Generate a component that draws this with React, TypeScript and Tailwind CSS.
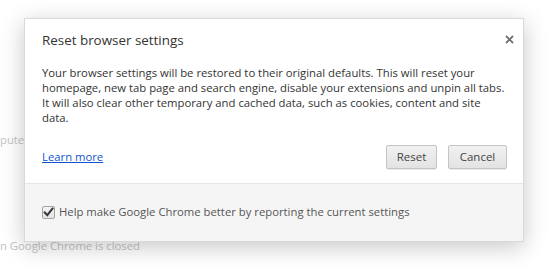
import React from "react"

function CheckMark() {
  return (
    <span className="flex h-[13px] w-[13px] items-center justify-center rounded-[2px] border border-[#a3a3a3] bg-gradient-to-b from-[#f4f4f4] to-[#e4e4e4]">
      <svg width="11" height="11" viewBox="0 0 11 11">
        <path d="M1.8 5.6 L4.3 8.2 L9.4 1.6" fill="none" stroke="#3a3a3a" strokeWidth="2.1" strokeLinecap="square" />
      </svg>
    </span>
  )
}

function Button({ label, width }: { label: string; width: string }) {
  return (
    <button
      className={`h-[24px] ${width} rounded-[2px] border border-[#c4c4c4] bg-gradient-to-b from-[#f1f1f1] to-[#e3e3e3] text-[11.5px] text-[#444] shadow-[0_1px_0_rgba(0,0,0,0.08)]`}
    >
      {label}
    </button>
  )
}

export default function App() {
  return (
    <div className="relative h-[272px] w-[548px] overflow-hidden bg-white font-['Open_Sans',sans-serif]">
      {/* page behind the dialog */}
      <div className="flex h-full flex-col text-[11.3px] text-[#c4c4c4]">
        <div className="mt-[132px] leading-[16px]">puter</div>
        <div className="mt-[90px] leading-[16px]">n Google Chrome is closed</div>
      </div>

      {/* dialog */}
      <div className="absolute left-[24px] top-[18px] flex h-[224px] w-[500px] flex-col border border-[#d9d9d9] bg-white shadow-[0_5px_22px_rgba(0,0,0,0.22)]">
        <div className="flex items-start justify-between pl-[17px] pr-[9px] pt-[11px]">
          <h1 className="text-[13.4px] leading-[20px] text-[#333]">Reset browser settings</h1>
          <svg width="9" height="9" viewBox="0 0 9 9" className="mt-[5px]">
            <path d="M1 1 L8 8 M8 1 L1 8" stroke="#707070" strokeWidth="1.8" />
          </svg>
        </div>

        <p className="mt-[15px] pl-[17px] text-[11.3px] leading-[15px] whitespace-nowrap text-[#333]">
          Your browser settings will be restored to their original defaults. This will reset your
          <br />
          homepage, new tab page and search engine, disable your extensions and unpin all tabs.
          <br />
          It will also clear other temporary and cached data, such as cookies, content and site
          <br />
          data.
        </p>

        <div className="mt-[20px] flex items-center justify-between pl-[17px] pr-[16px]">
          <a href="#" className="text-[11.3px] text-[#1155cc] underline">
            Learn more
          </a>
          <div className="flex gap-[11px]">
            <Button label="Reset" width="w-[51px]" />
            <Button label="Cancel" width="w-[59px]" />
          </div>
        </div>

        <div className="mt-auto flex h-[58px] items-center gap-[4px] border-t border-[#e6e6e6] bg-[#f5f5f5] pl-[17px]">
          <CheckMark />
          <span className="text-[11.3px] text-[#555]">
            Help make Google Chrome better by reporting the current settings
          </span>
        </div>
      </div>
    </div>
  )
}
